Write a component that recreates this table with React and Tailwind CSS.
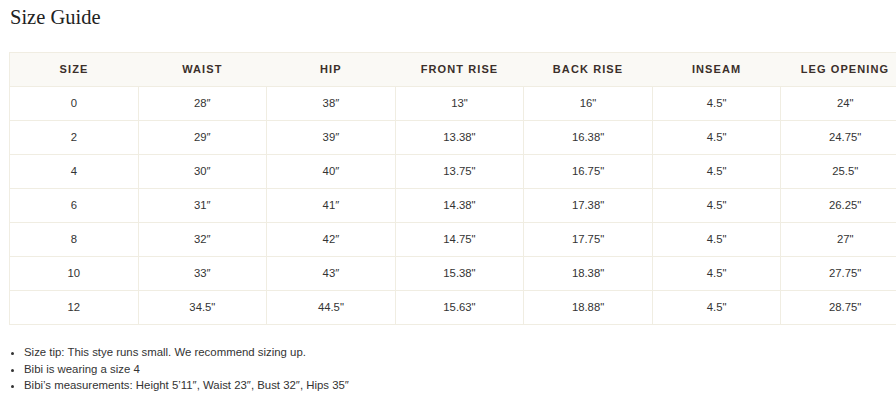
const HEADERS = ['SIZE', 'WAIST', 'HIP', 'FRONT RISE', 'BACK RISE', 'INSEAM', 'LEG OPENING']

const ROWS = [
  ['0', '28\u2033', '38\u2033', '13"', '16"', '4.5"', '24"'],
  ['2', '29\u2033', '39\u2033', '13.38"', '16.38"', '4.5"', '24.75"'],
  ['4', '30\u2033', '40\u2033', '13.75"', '16.75"', '4.5"', '25.5"'],
  ['6', '31\u2033', '41\u2033', '14.38"', '17.38"', '4.5"', '26.25"'],
  ['8', '32\u2033', '42\u2033', '14.75"', '17.75"', '4.5"', '27"'],
  ['10', '33\u2033', '43\u2033', '15.38"', '18.38"', '4.5"', '27.75"'],
  ['12', '34.5"', '44.5"', '15.63"', '18.88"', '4.5"', '28.75"'],
]

export default function App() {
  return (
    <div className="w-[896px] h-[412px] overflow-hidden bg-white text-[#333] font-['Liberation_Sans',Arial,sans-serif]">
      <h1 className="pl-[10px] pt-[4px] text-[20.5px] leading-[26px] text-[#222] font-['Liberation_Serif','Times_New_Roman',serif]">
        Size Guide
      </h1>

      {/* Table */}
      <div className="pl-[9px] pt-[22px]">
        <table className="w-[901px] table-fixed border-collapse border border-[#f0ede2] text-center">
          <thead>
            <tr className="bg-[#faf9f5]">
              {HEADERS.map(h => (
                <th key={h} className="h-[34px] p-0 text-[11px] font-bold tracking-[0.1em] text-[#3b2f2a]">
                  {h}
                </th>
              ))}
            </tr>
          </thead>
          <tbody>
            {ROWS.map(row => (
              <tr key={row[0]} className="border-t border-[#f0ede2]">
                {row.map((cell, i) => (
                  <td key={i} className="h-[34px] p-0 text-[11.3px] border-l border-[#f0ede2] text-[#333]">
                    {cell}
                  </td>
                ))}
              </tr>
            ))}
          </tbody>
        </table>
      </div>

      {/* Notes */}
      <ul className="mt-[19px] pl-[24px] list-disc text-[11.4px] leading-[16.5px] text-[#333]">
        <li>Size tip: This stye runs small. We recommend sizing up.</li>
        <li>Bibi is wearing a size 4</li>
        <li>Bibi’s measurements: Height 5’11″, Waist 23″, Bust 32″, Hips 35″</li>
      </ul>
    </div>
  )
}
